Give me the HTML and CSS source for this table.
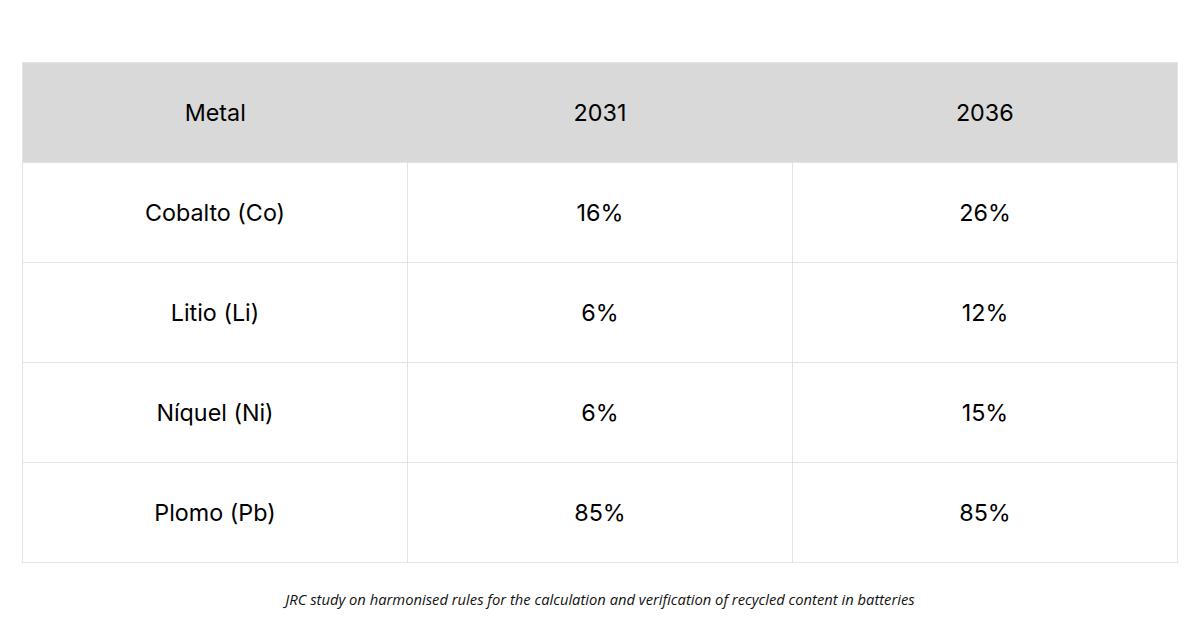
FILE: index.html
```html
<!DOCTYPE html>
<html>
<head>
<meta charset="utf-8">
<link rel="stylesheet" href="styles.css">
</head>
<body>
<div class="wrap">
<table class="data">
<thead>
<tr><th>Metal</th><th>2031</th><th>2036</th></tr>
</thead>
<tbody>
<tr><td>Cobalto (Co)</td><td>16%</td><td>26%</td></tr>
<tr><td>Litio (Li)</td><td>6%</td><td>12%</td></tr>
<tr><td>Níquel (Ni)</td><td>6%</td><td>15%</td></tr>
<tr><td>Plomo (Pb)</td><td>85%</td><td>85%</td></tr>
</tbody>
</table>
<p class="caption">JRC study on harmonised rules for the calculation and verification of recycled content in batteries</p>
</div>
</body>
</html>
```
FILE: styles.css
```css
html, body { margin: 0; padding: 0; background: #fff; }
.wrap { padding: 62px 22px 0 22px; }
.data {
  width: 100%;
  border-collapse: collapse;
  font-family: Inter, "Liberation Sans", sans-serif;
  font-size: 23.3px;
  color: #000;
  table-layout: fixed;
}
.data th, .data td {
  height: 99px;
  padding: 0;
  text-align: center;
  vertical-align: middle;
  font-weight: 400;
  line-height: 26px;
  border: 1px solid #e3e3e3;
}
.data th { background: #d9d9d9; border-left: none; border-right: none; }
.data th:first-child { border-left: 1px solid #e3e3e3; }
.data th:last-child { border-right: 1px solid #e3e3e3; }
.caption {
  margin: 26px 0 0 0;
  text-align: center;
  font-family: "Open Sans", sans-serif;
  font-style: italic;
  font-size: 14.75px;
  color: #111;
}
```
